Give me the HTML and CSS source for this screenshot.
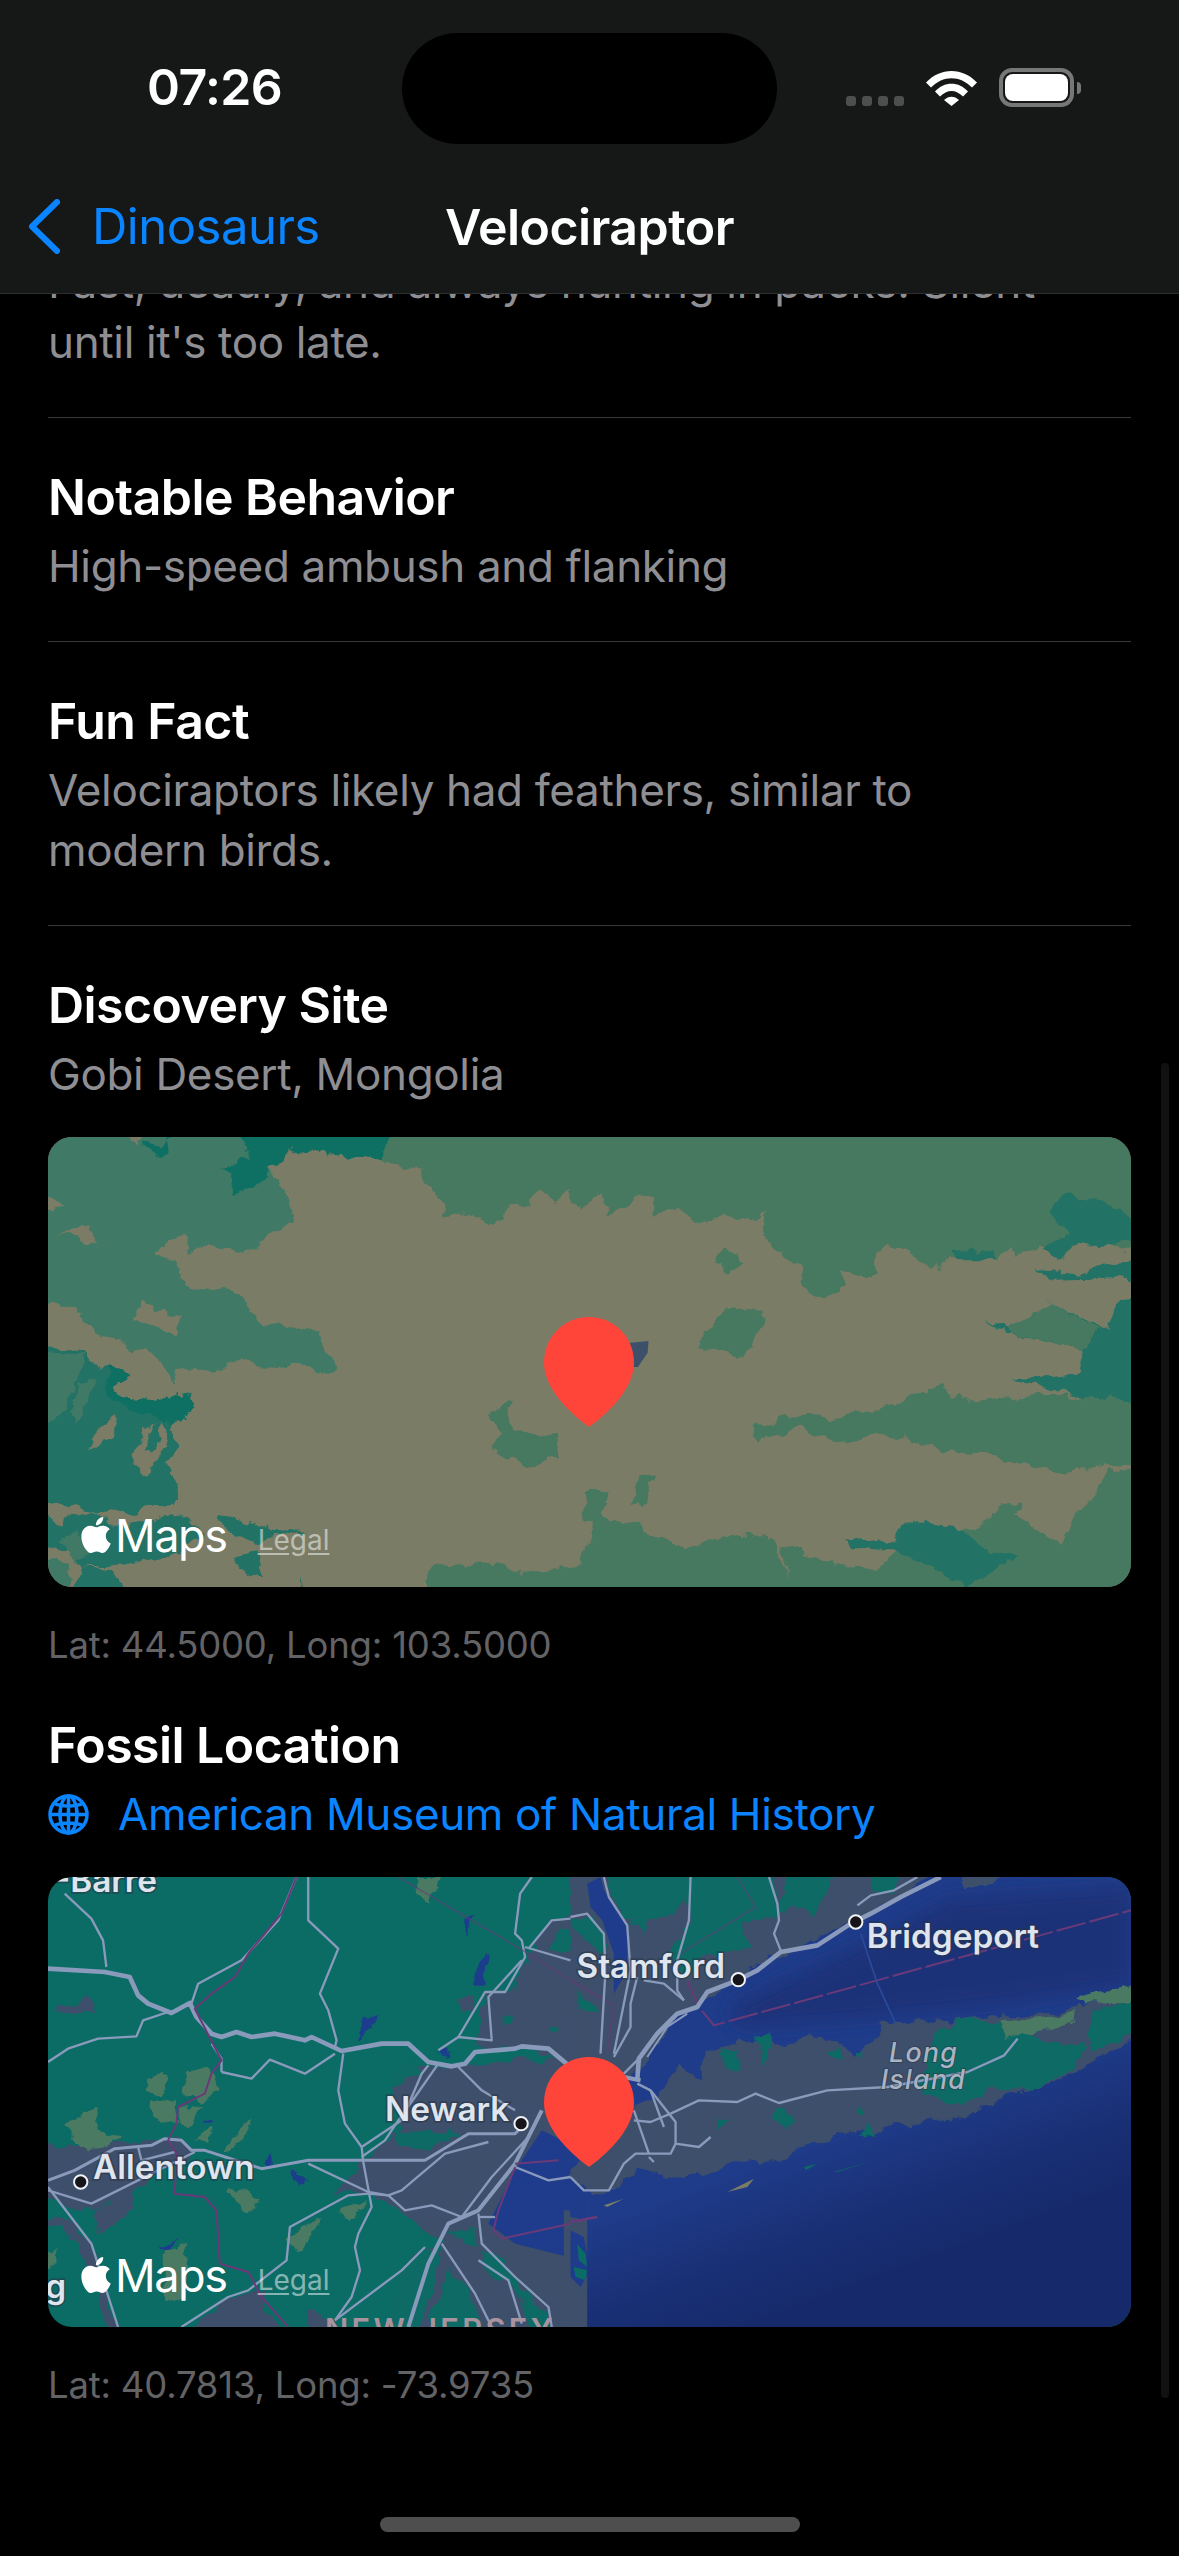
FILE: index.html
```html
<!DOCTYPE html>
<html lang="en">
<head>
<meta charset="utf-8">
<title>Velociraptor</title>
<link rel="stylesheet" href="styles.css">
</head>
<body>
<svg class="defs" width="0" height="0" aria-hidden="true">
  <defs>
    <symbol id="apple" viewBox="0 0 24 24"><path d="M12.152 6.896c-.948 0-2.415-1.078-3.96-1.04-2.04.027-3.91 1.183-4.961 3.014-2.117 3.675-.546 9.103 1.519 12.09 1.013 1.454 2.208 3.09 3.792 3.039 1.52-.065 2.09-.987 3.935-.987 1.831 0 2.35.987 3.96.948 1.637-.026 2.676-1.48 3.676-2.948 1.156-1.688 1.636-3.325 1.662-3.415-.039-.013-3.182-1.221-3.22-4.857-.026-3.04 2.48-4.494 2.597-4.559-1.429-2.09-3.623-2.324-4.39-2.376-2-.156-3.675 1.09-4.61 1.09zM15.53 3.83c.843-1.012 1.4-2.427 1.245-3.83-1.207.052-2.662.805-3.532 1.818-.78.896-1.454 2.338-1.273 3.714 1.338.104 2.715-.688 3.559-1.701"/></symbol>
    <symbol id="pin" viewBox="0 0 90 110"><path d="M45 0C70 0 90 20 90 46C90 70 66 95 45 110C24 95 0 70 0 46C0 20 20 0 45 0Z"/></symbol>
    <linearGradient id="ocean" gradientUnits="userSpaceOnUse" x1="700" y1="800" x2="860" y2="1230"><stop offset="0" stop-color="#1f3c8a"/><stop offset="0.6" stop-color="#192f74"/><stop offset="1" stop-color="#162a6b"/></linearGradient>
    <filter id="rough" x="-5%" y="-5%" width="110%" height="110%"><feTurbulence type="fractalNoise" baseFrequency="0.018" numOctaves="4" seed="7" result="n"/><feDisplacementMap in="SourceGraphic" in2="n" scale="46" xChannelSelector="R" yChannelSelector="G"/></filter>
    <filter id="soft" x="-10%" y="-10%" width="120%" height="120%"><feGaussianBlur stdDeviation="28"/></filter>
  </defs>
</svg>
<div class="screen">
  <main class="content">
    <section class="row">
      <p class="value">Fast, deadly, and always hunting in packs. Silent until it's too late.</p>
    </section>
    <section class="row">
      <h2 class="label">Notable Behavior</h2>
      <p class="value">High-speed ambush and flanking</p>
    </section>
    <section class="row">
      <h2 class="label">Fun Fact</h2>
      <p class="value">Velociraptors likely had feathers, similar to modern birds.</p>
    </section>
    <section class="block">
      <h2 class="label">Discovery Site</h2>
      <p class="value">Gobi Desert, Mongolia</p>
      <div class="map">
        <svg class="terrain" viewBox="0 0 3246 1350" preserveAspectRatio="none" aria-hidden="true">
          <rect width="3246" height="1350" fill="#7b7c66"/>
          <g filter="url(#rough)">
          <g fill="#3f7a66">
            <path d="M-40 -40H220L260 25L320 -40H720V40L660 95L690 130L740 230L735 255L680 280L630 330L570 350L480 320L415 345L410 295L360 310L325 345L385 380L405 450L490 465L565 455L590 510L640 565L700 570L770 565L810 610L862 680L830 705L790 690L700 690L640 680L570 665L520 705L420 690L385 700L370 750L340 680L300 630L240 640L220 610L160 600L130 565L105 560L100 530L30 500L-40 510V225L60 210L-40 170Z"/>
          </g>
          <g fill="#7b7c66">
            <path d="M25 295L120 265L150 315L110 320L70 295Z"/>
            <path d="M285 485L320 520L340 510L395 550L385 590L260 550Z"/>
          </g>
          <path d="M-40 620L110 640L150 700L190 695L250 720L210 740L210 780L320 790L430 765L440 810L370 860L390 930L350 980L390 1050L380 1100L300 1105L260 1130L170 1125L-40 1090Z" fill="#207265"/>
          <g fill="#7b7c66">
            <path d="M120 945L150 880L210 830L185 905Z"/>
            <path d="M250 970L285 880L325 855L295 890L290 935L320 930L345 845L362 880L340 950L300 1020L275 1000Z"/>
          </g>
          <path d="M60 820L105 730L150 720L110 810L80 870Z" fill="#3f7a66"/>
          <path d="M-40 640L110 650L100 720L40 830L-40 860Z" fill="#3f7a66"/>
          <path d="M185 695L250 720L210 745V780L320 790L430 765L440 810L370 860L340 840L280 830L210 800L180 760Z" fill="#0e6f62"/>
          <g fill="#207265">
            <path d="M80 1130L130 1120L190 1170L350 1140L410 1135L470 1190L400 1240L300 1270L170 1290L100 1290L60 1240L-40 1220V1120L40 1160Z"/>
            <path d="M500 1140L560 1150L640 1170L780 1185L700 1190L640 1220L570 1200L510 1170Z"/>
            <path d="M550 1260L620 1240L650 1310L600 1320Z"/>
            <path d="M750 1310L760 1390H745Z"/>
            <path d="M95 1290L200 1300L235 1390H60Z"/>
          </g>
          <path d="M35 1210L90 1180L140 1240L80 1270Z" fill="#3f7a66"/>
          <path d="M-40 1260L60 1280L65 1390H-40Z" fill="#3f7a66"/>
          <path d="M1315 840L1385 795L1370 850L1385 880L1530 900L1520 960L1420 990L1330 935L1360 880Z" fill="#467860"/>
          <g transform="scale(2.257 1) translate(-65 -50)">
            <path fill="#467860" d="M500 0V120L560 150L590 280L640 285L650 310L670 290L680 250L700 265L720 210L740 250L755 205L770 265L800 225L810 280L850 225L870 235L870 285L900 260L925 305L980 290L1005 315L1020 270L1015 350L1065 440L1060 490L1095 540L1125 495L1110 455L1160 465L1165 395L1185 370L1245 440L1265 420L1285 415L1330 420L1345 380L1350 415L1385 375L1410 415L1435 370L1475 370L1530 410V0Z"/>
            <g fill="#207265">
              <path d="M1395 270L1420 215L1465 240L1530 320V350L1460 375L1435 370L1405 415L1385 385L1420 335Z"/>
              <path d="M1265 390L1325 390L1330 420L1270 420Z"/>
              <path d="M1530 410L1465 430L1440 460L1380 445L1400 475L1490 470L1530 510Z"/>
              <path d="M1355 510L1395 550L1340 620L1305 600L1340 640L1440 690L1430 760L1380 770L1345 780L1430 820L1455 860L1530 860V520L1490 530L1470 625L1395 550Z"/>
              <path d="M1375 1340L1410 1360L1370 1440Z"/>
              <path d="M1465 1130L1490 1050L1490 1170Z"/>
            </g>
            <g fill="#467860">
              <path d="M1395 550L1465 625L1440 690L1345 640L1340 620Z"/>
              <path d="M1000 920L1075 875L1100 900L1180 860L1250 790L1285 850L1345 830L1400 820L1530 850V1040L1480 1030L1420 1060L1330 1010L1250 990L1180 940L1120 965L1060 925L1005 970Z"/>
              <path d="M965 375L990 420L975 460L950 430Z"/>
              <path d="M980 555L1015 590L1000 680L985 715L930 680L935 630Z"/>
              <path d="M650 885L680 845L670 905L680 935L715 970L745 950L735 1010L700 1040L655 985L670 930Z"/>
              <path d="M850 1075L870 1075L855 1160L840 1150Z"/>
              <path d="M775 1115L810 1115L800 1200L780 1210Z"/>
              <path d="M560 1440L580 1330L620 1340L640 1320L700 1360L770 1340L790 1200L845 1205L880 1245L910 1290L950 1255L1030 1250L1050 1380L1040 1280L1115 1335L1170 1340L1200 1290L1300 1220L1330 1150L1360 1150L1350 1190L1410 1270L1475 1040L1530 1070V1440Z"/>
            </g>
            <path d="M1125 1250L1190 1270L1200 1205L1270 1220L1320 1290L1355 1310L1285 1395L1240 1340L1190 1290L1130 1290Z" fill="#207265"/>
          </g>
          <path d="M280 20L340 30L420 -40H1050L1000 70L725 40L665 95L655 125L555 175L550 110L510 90L610 70L560 -40H350L365 50L320 60L280 35Z" fill="#0e6f62"/>
          </g>
          <path d="M1740 618L1800 612L1797 648L1768 690H1740Z" fill="#3d5069"/>
        </svg>
        <svg class="pin"><use href="#pin"/></svg>
        <div class="attribution">
          <svg class="apple"><use href="#apple"/></svg>
          <span class="maps-word">Maps</span>
          <span class="legal">Legal</span>
        </div>
      </div>
      <p class="coords">Lat: 44.5000, Long: 103.5000</p>
    </section>
    <section class="block block-fossil">
      <h2 class="label">Fossil Location</h2>
      <div class="link-row">
        <svg class="globe" viewBox="0 0 41 41" aria-hidden="true">
          <circle cx="20.5" cy="20.5" r="18.5"/>
          <ellipse cx="20.5" cy="20.5" rx="8.5" ry="18.5"/>
          <path d="M20.5 2V39M2 20.5H39M6 9.5C14 13 27 13 35 9.5M6 31.5C14 28 27 28 35 31.5"/>
        </svg>
        <span class="link">American Museum of Natural History</span>
      </div>
      <div class="map">
        <svg class="terrain" viewBox="0 0 3246 1350" preserveAspectRatio="none" aria-hidden="true">
          <rect width="3246" height="1350" fill="#0b6b65"/>
          <g filter="url(#rough)">
          <g fill="#3e4f6b">
            <path d="M1280 500L1310 350L1390 340L1440 240L1510 130L1600 120V560L1400 510L1340 520Z"/>
            <path d="M1030 620L1110 570L1600 540V1390H1000L1050 1250L1100 1130L1180 1100L1100 1030L1000 970L900 940L850 950L1000 800L1060 750L1040 680Z"/>
            <path d="M-40 800L200 800L400 780L440 820L300 900L240 960L120 1000L-40 960Z"/>
            <path d="M-40 1040L60 1030L130 1100L215 1390H190L110 1150L50 1060Z"/>
            <path d="M30 400L90 370L120 355L155 405H30Z"/>
            <path d="M400 1390L540 1260L640 1240L660 1300L720 1390Z"/>
            <path d="M780 1300L860 1330L880 1390H770Z"/>
            <path d="M1230 365L1270 360L1280 400L1240 405Z"/>
            <path d="M130 1000L190 980L250 940L260 990L200 1030L170 1070L140 1050Z"/>
          </g>
          <g fill="#0b6b65">
            <path d="M1200 1070L1280 1050L1290 1110L1240 1090Z"/>
            <path d="M1300 1120L1350 1150L1450 1250L1460 1320L1400 1230L1310 1180Z"/>
            <path d="M1020 570L1090 550L1110 590L1050 620L1030 610Z"/>
            <path d="M1040 760L1250 770L1140 810L1050 810Z"/>
            <path d="M1360 410L1390 410L1390 440L1360 440Z"/>
            <path d="M1500 450L1530 450L1530 470L1500 470Z"/>
            <path d="M1520 160L1600 150V230L1510 220Z"/>
            <path d="M1000 1390L1060 1180L1120 1120L1180 1110L1150 1250L1100 1390Z"/>
            <path d="M1210 1170L1280 1290L1320 1390H1180L1150 1320Z"/>
            <path d="M1420 1280L1500 1300L1510 1390H1450Z"/>
          </g>
          <g fill="#4c7a63">
            <path d="M300 600L340 580L360 620L335 655L300 640Z"/>
            <path d="M415 580L480 575L515 630L470 670L400 650Z"/>
            <path d="M305 680L380 670L390 740L330 740Z"/>
            <path d="M50 750L110 710L140 690L150 760L220 780L200 800L130 820L80 790Z"/>
            <path d="M400 690L465 680L420 750L395 740Z"/>
            <path d="M440 790L490 760L480 810Z"/>
            <path d="M520 820L610 730L600 770L540 825Z"/>
            <path d="M530 940L590 940L640 970L600 1010L570 980Z"/>
            <path d="M720 1080L820 1020L800 1060L760 1120L730 1110Z"/>
            <path d="M870 1000L960 980L900 1030Z"/>
            <path d="M350 1120L410 1110L420 1260L350 1270Z"/>
            <path d="M-10 1130L35 1120L-10 1190Z"/>
            <path d="M1110 0H1180L1140 80L1110 50Z"/>
          </g>
          <g fill="#1f3c8c">
            <path d="M920 470L950 420L980 410L970 450L930 495Z"/>
            <path d="M1250 140L1285 110L1260 175Z"/>
            <path d="M1310 230L1330 230L1310 320L1270 320Z"/>
            <path d="M645 840L670 830L670 865L650 865Z"/>
            <path d="M725 880L770 890L780 915L750 910Z"/>
            <path d="M460 740L490 730L490 745Z"/>
            <path d="M330 1110L385 1090L350 1120Z"/>
            <path d="M1170 530L1200 520L1190 550Z"/>
          </g>
          </g>
          <path d="M1400 880L1480 760L1600 820V1150L1400 1100L1320 1040L1350 980Z" fill="#1f3c8c"/>
          <g transform="translate(1566 0)">
            <rect x="-20" y="1000" width="90" height="350" fill="#3e4f6b"/>
            <path d="M0 1060L40 1080L60 1180L30 1230L0 1200Z" fill="#1f3c8c"/>
            <path d="M20 1100L45 1130L50 1170L25 1150Z" fill="#0b6b65"/>
            <path d="M10 1170L50 1180L45 1210L15 1200Z" fill="#0b6b65"/>
            <rect x="50" width="1640" height="1350" fill="url(#ocean)"/>
            <path d="M-30 640L50 640V1030L0 1020Z" fill="#1f3c8a"/>
            <path d="M480 390L900 190L1130 70L1680 30V320L1300 380L900 420L500 450Z" fill="#1a3078" filter="url(#soft)"/>
            <g filter="url(#rough)">
              <path d="M0 870L280 630L320 560L390 610L400 530L480 500L580 490L640 510L720 480L800 490L850 530L915 490L920 430L1030 440L1180 425L1290 420L1480 400L1720 330V470L1500 590L1380 640L1240 680L1180 720L1030 740L830 770L720 810L600 850L480 860L330 910L200 870L130 945L40 940L0 900Z" fill="#3e4f6b"/>
              <g fill="#0b6b65">
                <path d="M1050 590L1100 460L1170 425L1290 440L1420 490L1550 510L1500 580L1380 640L1240 640L1180 700L1060 650Z"/>
                <path d="M450 520L500 520L510 580L450 580Z"/>
                <path d="M555 470L600 460L590 560L560 510Z"/>
                <path d="M620 680L650 680L675 740L640 750L595 720Z"/>
                <path d="M437 730L475 735L440 760Z"/>
                <path d="M850 680L870 680L875 710L855 705Z"/>
                <path d="M885 730L900 760L910 770L875 780Z"/>
                <path d="M775 530L820 510L800 560Z"/>
                <path d="M850 520L880 510L870 535Z"/>
              </g>
              <path d="M1285 430L1520 405L1490 450L1300 485Z" fill="#4c7a63"/>
              <path d="M1525 360L1700 320V380L1530 375Z" fill="#4c7a63"/>
              <path d="M1560 400L1700 370V470L1560 520Z" fill="#0b6b65"/>
              <path d="M0 -40H1130L1000 60L880 130L800 150L700 210L600 240L480 320L330 410L270 480L230 560L180 600L0 600Z" fill="#3e4f6b"/>
              <path d="M1170 40L1400 -30H1180Z" fill="#3e4f6b"/>
              <g fill="#0b6b65">
                <path d="M300 240L360 130L330 -40H610L620 110L520 150L530 215L400 235L340 300Z"/>
                <path d="M100 -40H360L350 60L300 110L240 130L220 170L180 140L130 70Z"/>
                <path d="M680 -40H800L730 120L690 85L610 120Z"/>
                <path d="M0 130L50 110L100 170V230L30 170Z"/>
                <path d="M20 330L80 400L30 400Z"/>
                <path d="M890 -40H1010L960 50L920 40Z"/>
              </g>
            </g>
            <path d="M700 870L740 860L705 880Z" fill="#0b6b65"/>
            <path d="M790 885L910 850L800 885Z" fill="#0b6b65"/>
            <path d="M100 985L160 965L110 990Z" fill="#7b7c66"/>
            <path d="M470 945L550 905L530 930Z" fill="#7b7c66"/>
            <path d="M50 20L90 0L100 40L170 150L170 280L130 350L130 230L95 130L60 90Z" fill="#1f3c8c"/>
            <g fill="none" stroke="#6a3a78" stroke-width="5">
              <path d="M0 310L130 385L110 530" opacity=".7"/>
              <path d="M350 310L385 390L430 445L1680 100" stroke-width="6" stroke-dasharray="90 12"/>
              <path d="M500 0L555 90L330 230" opacity=".55"/>
              <path d="M0 1035L80 1020" stroke-width="7"/>
            </g>
            <path d="M870 170L920 320L975 440" fill="none" stroke="#2a4a9a" stroke-width="5"/>
            <g fill="none" stroke="#8a9abb" stroke-width="7" stroke-linejoin="round">
              <path d="M860 85L900 55L970 40L1040 0"/>
              <path d="M0 120L50 110L100 170L105 280L90 530"/>
              <path d="M100 0L115 60L170 145L180 280L130 530"/>
              <path d="M360 0L355 130L320 250L320 340L340 370"/>
              <path d="M595 0L620 80L625 130L610 170L630 220"/>
              <path d="M220 310L280 320L340 370"/>
              <path d="M200 300L180 380L180 450L130 540"/>
              <path d="M160 590L205 545"/>
              <path d="M300 710L385 670L500 675L555 650L625 678L770 640L950 630L1190 585L1300 535L1340 485"/>
              <path d="M200 620L240 640L315 735V800L385 810L420 780"/>
              <path d="M190 730L240 735L300 710"/>
              <path d="M240 640L280 750"/>
              <path d="M190 700L235 830H300L315 800"/>
              <path d="M235 830H195L160 860L115 940H40L0 900"/>
              <path d="M235 840L250 855"/>
            </g>
            <path d="M200 610L205 545L260 470L320 410L380 390L410 345L500 310L560 280L630 225L740 205L840 140L900 110L990 60L1110 0" fill="none" stroke="#8a9abb" stroke-width="14" stroke-linejoin="round"/>
            <path d="M230 540L290 450L350 410" fill="none" stroke="#8a9abb" stroke-width="6"/>
            <path d="M160 600L210 610" fill="none" stroke="#8a9abb" stroke-width="13"/>
          </g>
          <g fill="none" stroke="#8a9abb" stroke-width="7" stroke-linejoin="round">
            <path d="M0 555L60 515L150 485L265 478L285 430L360 405"/>
            <path d="M50 50L130 125L165 190L175 270"/>
            <path d="M430 380L450 320L580 250L690 130L745 0"/>
            <path d="M780 0V130L870 215L815 350L840 400L865 490L860 510"/>
            <path d="M885 530L870 640L890 740L940 810L945 855L970 990L930 1070L920 1110L935 1180L910 1260L860 1330"/>
            <path d="M0 910L80 880L200 815L310 805L350 785L400 790L430 820L470 820L640 875L780 850L1130 850L1260 770L1400 770L1420 750" stroke-width="9"/>
            <path d="M270 810L280 850L380 825"/>
            <path d="M780 860L960 945L1020 955L1060 940L1190 830L1320 795"/>
            <path d="M0 940L130 980L240 925L440 825"/>
            <path d="M0 930L130 1100L210 1350"/>
            <path d="M960 950L900 955L725 1050L715 1150L600 1240L540 1260L400 1350"/>
            <path d="M960 950L1020 955L1070 1000L1150 985L1240 1020"/>
            <path d="M520 585L610 605L665 548L770 590L860 530"/>
            <path d="M490 500L520 545V585"/>
            <path d="M940 810L1060 730L1120 590L1140 565"/>
            <path d="M940 840L1010 790L1050 730L1100 660L1170 560"/>
            <path d="M1230 480L1310 345H1370L1430 240L1420 190L1400 170L1415 50L1450 0"/>
            <path d="M1430 210L1566 250"/>
            <path d="M1420 250L1320 360L1330 490L1230 480L1170 520"/>
            <path d="M1230 570L1300 640L1400 700"/>
            <path d="M1440 215L1510 130L1566 125"/>
            <path d="M1440 780L1330 900L1240 1020"/>
            <path d="M1130 1110L1060 1180L860 1330"/>
            <path d="M1290 1010L1300 1100L1400 1200L1500 1290L1510 1350"/>
            <path d="M1180 1100L1280 1250L1330 1350"/>
            <path d="M1290 1150L1380 1210L1420 1340"/>
            <path d="M1400 870L1500 910L1566 900"/>
            <path d="M1290 1020H1340"/>
          </g>
          <g fill="none" stroke="#8a9abb" stroke-linejoin="round">
            <path d="M0 275L170 285L245 300L270 355L300 380L370 408L425 378L445 420L490 470L520 480L565 465L610 480L680 470L770 490L790 480L880 522L1000 500L1080 500L1140 555L1210 568L1250 560L1280 525L1400 515L1420 508L1500 515L1566 570" stroke-width="14"/>
            <path d="M1480 700L1400 860L1290 1000L1200 1040L1140 1160L1080 1350" stroke-width="12"/>
          </g>
          <g fill="none" stroke="#6a3a78" stroke-width="6" stroke-linejoin="round">
            <path d="M745 0L700 110L600 230L560 300L490 350L440 395L520 550L490 590L470 650L390 690L385 740L360 790L385 830L380 950L470 960L505 1000L515 1160L600 1185L640 1260L720 1350"/>
            <path d="M1050 0L1440 230L1566 310" opacity=".55" stroke-width="5"/>
            <path d="M1400 860L1530 850M1400 870L1350 1000L1335 1060L1360 1085L1566 1040"/>
          </g>
          <g class="city-dot">
            <circle cx="98" cy="915" r="20"/>
            <circle cx="1418" cy="740" r="20"/>
            <circle cx="2069" cy="308" r="20"/>
            <circle cx="2421" cy="135" r="20"/>
          </g>
          <g class="map-label">
            <text x="20" y="46">-Barre</text>
            <text x="1010" y="733">Newark</text>
            <text x="135" y="905">Allentown</text>
            <text x="-8" y="1262">g</text>
            <text x="1584" y="303">Stamford</text>
            <text x="2454" y="213">Bridgeport</text>
          </g>
          <text class="map-state" x="830" y="1392">NEW JERSEY</text>
          <g class="map-island">
            <text x="2521" y="555">Long</text>
            <text x="2496" y="637">Island</text>
          </g>
        </svg>
        <svg class="pin"><use href="#pin"/></svg>
        <div class="attribution">
          <svg class="apple"><use href="#apple"/></svg>
          <span class="maps-word">Maps</span>
          <span class="legal">Legal</span>
        </div>
      </div>
      <p class="coords">Lat: 40.7813, Long: -73.9735</p>
    </section>
  </main>

  <header class="header">
    <div class="status">
      <span class="time">07:26</span>
      <div class="island"></div>
      <div class="status-icons">
        <div class="signal"><i></i><i></i><i></i><i></i></div>
        <svg class="wifi" viewBox="0 0 51 37" aria-hidden="true">
          <path d="M0 13.500C14-2 37-2 51 13.500L46 18.500C34 6 17 6 5 18.500Z"/>
          <path d="M9 22.500C18 12 33 12 42 22.500L37 27.500C30 20 21 20 14 27.500Z"/>
          <path d="M18 31C22.500 26.500 28.500 26.500 33 31L25.500 37Z"/>
        </svg>
        <div class="battery"><div class="battery-fill"></div></div>
        <div class="battery-nub"></div>
      </div>
    </div>
    <nav class="nav">
      <div class="back">
        <svg class="chevron" viewBox="0 0 32 55" aria-hidden="true"><path d="M29 3L4 27.500L29 52"/></svg>
        <span class="back-text">Dinosaurs</span>
      </div>
      <h1 class="title">Velociraptor</h1>
    </nav>
  </header>
  <div class="scroll-indicator"></div>
  <div class="home-indicator"></div>
</div>
</body>
</html>
```
FILE: styles.css
```css
* { box-sizing: border-box; }
html, body { margin: 0; padding: 0; background: #000; }
body { font-family: Inter, "Liberation Sans", sans-serif; color: #fff; }
.defs { position: absolute; }
.screen { position: relative; width: 1179px; height: 2556px; overflow: hidden; background: #000; }

.content { padding: 252px 48px 0; }
.row { padding: 0 0 45px; margin-bottom: 46px; border-bottom: 1px solid #38383a; }
.label { margin: 0 0 6px; font-size: 50px; line-height: 66px; font-weight: 600; letter-spacing: -0.55px; }
.value { margin: 0; max-width: 1020px; font-size: 44px; line-height: 60px; font-weight: 400; color: #8e8e93; letter-spacing: -0.35px; }
.map { position: relative; margin-top: 33px; height: 450px; border-radius: 24px; overflow: hidden; }
.terrain { display: block; width: 100%; height: 100%; }
.pin { position: absolute; left: 496px; top: 180px; width: 90px; height: 110px; fill: #ff453a; }
.attribution { position: absolute; left: 30px; bottom: 26px; display: flex; align-items: flex-end; height: 50px; }
.apple { width: 36px; height: 38px; fill: #fff; margin-bottom: 7px; }
.maps-word { margin-left: 1px; font-size: 45px; line-height: 50px; font-weight: 400; letter-spacing: -1.4px; color: #fff; }
.legal { margin-left: 31px; margin-bottom: 5px; font-size: 28px; line-height: 32px; color: rgba(255,255,255,.5); text-decoration: underline; text-underline-offset: 3px; }
.coords { margin: 31px 0 0; font-size: 36.5px; line-height: 54px; color: #636366; letter-spacing: -0.2px; }
.block-fossil { margin-top: 40px; }
.link-row { display: flex; align-items: center; gap: 29px; height: 60px; }
.globe { width: 41px; height: 41px; fill: none; stroke: #0a84ff; stroke-width: 3.500; flex: none; }
.link { font-size: 44px; line-height: 60px; color: #0a84ff; letter-spacing: -0.35px; }

.city-dot circle { fill: #16161a; stroke: #eef1f5; stroke-width: 6; }
.map-label text { font-family: Inter, sans-serif; font-size: 100px; font-weight: 600; fill: #dfe5ee; stroke: #2a3346; stroke-width: 10px; paint-order: stroke; stroke-opacity: .55; }
.map-state { font-family: Inter, sans-serif; font-size: 92px; font-weight: 600; letter-spacing: 10px; fill: #a8939f; }
.map-island text { font-family: Inter, sans-serif; font-size: 80px; font-style: italic; font-weight: 500; letter-spacing: 4px; fill: #a9b3c2; stroke: #2a3346; stroke-width: 6px; paint-order: stroke; stroke-opacity: .5; }

.header { position: absolute; left: 0; top: 0; width: 100%; height: 294px; background: #161818; border-bottom: 1px solid #2c2e2e; }
.status { display: grid; grid-template-columns: 402px 375px 402px; height: 160px; }
.time { padding: 57px 0 0 147px; font-size: 50px; line-height: 60px; font-weight: 600; letter-spacing: -0.6px; }
.island { margin-top: 33px; height: 111px; border-radius: 56px; background: #000; }
.status-icons { display: flex; align-items: flex-start; padding: 68px 0 0 69px; }
.signal { display: flex; gap: 6px; margin-top: 28px; margin-right: 22px; }
.signal i { display: block; width: 10px; height: 10px; border-radius: 3px; background: #4d4e4e; }
.wifi { width: 51px; height: 37px; fill: #fff; margin-top: 1px; margin-right: 22px; }
.battery { width: 75px; height: 39px; padding: 2px; border: 4px solid #777; border-radius: 13px; }
.battery-fill { width: 100%; height: 100%; border-radius: 8px; background: #fff; }
.battery-nub { width: 4px; height: 12px; margin: 14px 0 0 3px; border-radius: 0 6px 6px 0; background: #777; }
.nav { display: grid; grid-template-columns: 1fr auto 1fr; align-items: center; height: 133px; }
.back { display: flex; align-items: center; padding-left: 28px; gap: 32px; }
.chevron { width: 32px; height: 55px; fill: none; stroke: #0a84ff; stroke-width: 6; stroke-linecap: round; stroke-linejoin: round; }
.back-text { font-size: 49px; line-height: 66px; color: #0a84ff; letter-spacing: -0.5px; }
.title { margin: 0; font-size: 50px; line-height: 66px; font-weight: 600; letter-spacing: -0.55px; }

.scroll-indicator { position: absolute; left: 1161px; top: 1063px; width: 8px; height: 1335px; border-radius: 4px; background: #111; }
.home-indicator { position: absolute; left: 380px; top: 2517px; width: 420px; height: 15px; border-radius: 8px; background: #4e4e4e; }
```
